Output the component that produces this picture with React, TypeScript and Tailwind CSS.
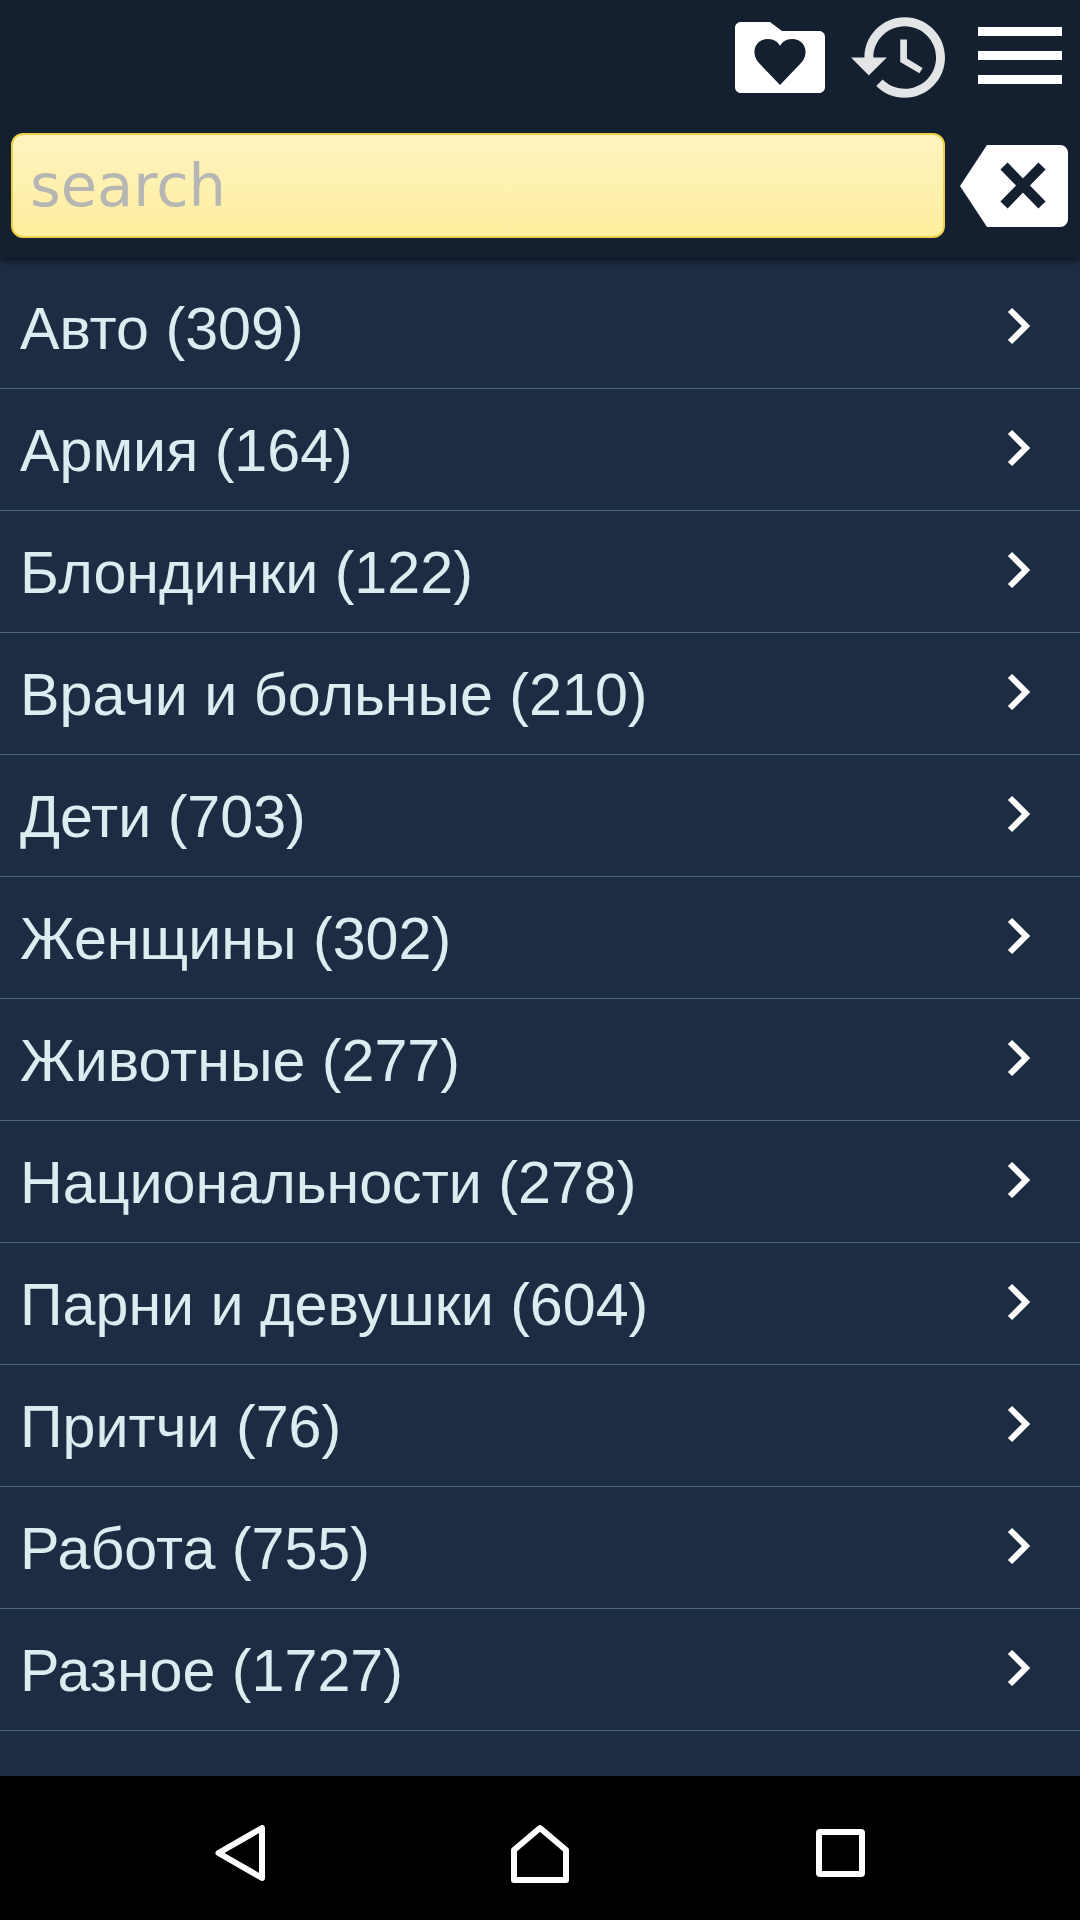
const categories = [
  "Авто (309)",
  "Армия (164)",
  "Блондинки (122)",
  "Врачи и больные (210)",
  "Дети (703)",
  "Женщины (302)",
  "Животные (277)",
  "Национальности (278)",
  "Парни и девушки (604)",
  "Притчи (76)",
  "Работа (755)",
  "Разное (1727)",
];

const FolderHeart = () => (
  <svg width="90" height="71" viewBox="0 0 90 71" className="block">
    <path
      d="M6 0H35L47 9H84C87.5 9 90 11.5 90 15V65C90 68.5 87.5 71 84 71H6C2.5 71 0 68.5 0 65V6C0 2.5 2.5 0 6 0Z"
      fill="#ffffff"
    />
    <path
      d="M45 63L24 41C15 31 20 17 33 17C39 17 43 20 45 24C47 20 51 17 57 17C70 17 75 31 66 41Z"
      fill="#141f2f"
    />
  </svg>
);

const History = () => (
  <svg width="94" height="81" viewBox="1 3 21 18" className="block">
    <path
      d="M13 3c-4.97 0-9 4.03-9 9H1l3.89 3.89.07.14L9 12H6c0-3.87 3.13-7 7-7s7 3.13 7 7-3.13 7-7 7c-1.93 0-3.68-.79-4.94-2.06l-1.42 1.42C8.27 19.99 10.51 21 13 21c4.97 0 9-4.03 9-9s-4.03-9-9-9zm-1 5v5l4.28 2.54.72-1.21-3.5-2.08V8H12z"
      fill="#e2e4e6"
    />
  </svg>
);

const ClearKey = () => (
  <svg width="108" height="82" viewBox="0 0 108 82" className="block">
    <path
      d="M27 0H100C104.5 0 108 3.5 108 8V74C108 78.5 104.5 82 100 82H27L0 41Z"
      fill="#ffffff"
    />
    <path d="M44 21L82 60M82 21L44 60" stroke="#141f2f" strokeWidth="10" fill="none" />
  </svg>
);

const Chevron = () => (
  <svg width="24" height="38" viewBox="0 0 24 38" className="block">
    <path d="M3 3L19 19L3 35" stroke="#ffffff" strokeWidth="6" fill="none" />
  </svg>
);

export default function App() {
  return (
    <div className="flex h-[1920px] w-[1080px] flex-col overflow-hidden bg-[#1c2d43] font-['Liberation_Sans',Arial,sans-serif]">
      <header className="relative z-10 h-[258px] shrink-0 bg-[#141f2f] shadow-[0_3px_6px_rgba(0,0,0,0.55)]">
        <div className="flex h-[133px] justify-end pr-[18px]">
          <div className="mt-[22px]">
            <FolderHeart />
          </div>
          <div className="ml-[26px] mt-[17px]">
            <History />
          </div>
          <div className="ml-[33px] mt-[27px] flex flex-col gap-[15px]">
            <div className="h-[9px] w-[84px] bg-white" />
            <div className="h-[9px] w-[84px] bg-white" />
            <div className="h-[9px] w-[84px] bg-white" />
          </div>
        </div>
        <div className="flex items-center pl-[11px]">
          <div className="flex h-[105px] w-[934px] items-center rounded-[12px] border-2 border-[#ecd048] bg-gradient-to-b from-[#fff3c0] to-[#feee9e] pl-[17px] pt-[2px] font-['DejaVu_Sans',sans-serif] text-[59px] text-[#b6b6b4]">
            search
          </div>
          <div className="ml-[15px]">
            <ClearKey />
          </div>
        </div>
      </header>

      <main className="flex-1 pt-[9px]">
        {categories.map((name) => (
          <div
            key={name}
            className="flex h-[122px] items-center justify-between border-b border-[#4f6079] pl-[20px] pr-[49px]"
          >
            <span className="pt-[3px] text-[59.2px] text-[#dcedf1]">{name}</span>
            <div className="mb-[4px]">
              <Chevron />
            </div>
          </div>
        ))}
      </main>

      <nav className="flex h-[144px] shrink-0 items-center justify-center bg-black pt-[10px]">
        <div className="flex w-[300px] justify-center">
          <svg width="50" height="56" viewBox="0 0 50 56" className="block">
            <path d="M47 3V53L3.500 28Z" stroke="#ffffff" strokeWidth="6" strokeLinejoin="round" fill="none" />
          </svg>
        </div>
        <div className="flex w-[300px] justify-center">
          <svg width="58" height="59" viewBox="0 0 58 59" className="block">
            <path d="M3 56V26L29 4L55 26V56Z" stroke="#ffffff" strokeWidth="6" strokeLinejoin="round" fill="none" />
          </svg>
        </div>
        <div className="flex w-[300px] justify-center">
          <div className="h-[48px] w-[49px] rounded-[4px] border-[6px] border-white" />
        </div>
      </nav>
    </div>
  );
}
